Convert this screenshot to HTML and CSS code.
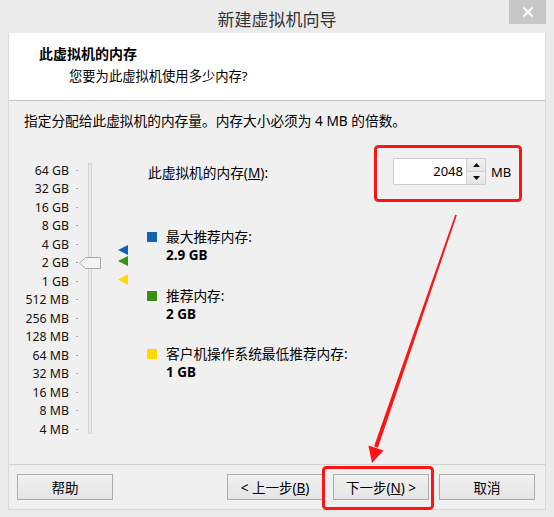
FILE: index.html
```html
<!DOCTYPE html>
<html lang="zh-CN">
<head>
<meta charset="utf-8">
<title>新建虚拟机向导</title>
<link rel="stylesheet" href="styles.css">
</head>
<body>
<div class="window">
  <div class="titlebar">
    <div class="title">新建虚拟机向导</div>
    <div class="close">
      <svg width="12" height="12" viewBox="0 0 12 12"><path d="M1.5 1.5 L10.5 10.5 M10.5 1.5 L1.5 10.5" stroke="#fff" stroke-width="2" fill="none"/></svg>
    </div>
  </div>
  <div class="client">
    <div class="header">
      <div class="h-title">此虚拟机的内存</div>
      <div class="h-sub">您要为此虚拟机使用多少内存?</div>
    </div>
    <div class="content">
      <p class="desc">指定分配给此虚拟机的内存量。内存大小必须为 4 MB 的倍数。</p>
      <div class="main">
        <div class="slider">
          <ul class="scale">
            <li>64 GB</li>
            <li>32 GB</li>
            <li>16 GB</li>
            <li>8 GB</li>
            <li>4 GB</li>
            <li>2 GB</li>
            <li>1 GB</li>
            <li>512 MB</li>
            <li>256 MB</li>
            <li>128 MB</li>
            <li>64 MB</li>
            <li>32 MB</li>
            <li>16 MB</li>
            <li>8 MB</li>
            <li>4 MB</li>
          </ul>
          <div class="track"></div>
          <svg class="thumb" width="23" height="13" viewBox="0 0 23 13"><path d="M0.5 6 L6.5 0.5 L21.5 0.5 L21.5 11.5 L6.5 11.5 Z" fill="#f4f4f4" stroke="#a9a9a9"/></svg>
          <svg class="marker m-blue" width="10" height="10" viewBox="0 0 10 10"><path d="M0 5 L10 0 L10 10 Z" fill="#0f63b0"/></svg>
          <svg class="marker m-green" width="10" height="10" viewBox="0 0 10 10"><path d="M0 5 L10 0 L10 10 Z" fill="#3c8f13"/></svg>
          <svg class="marker m-yellow" width="10" height="11" viewBox="0 0 10 11"><path d="M0 5.5 L10 0 L10 11 Z" fill="#ffd800"/></svg>
        </div>
        <div class="right">
          <div class="mem-row">
            <label class="mem-label">此虚拟机的内存(<u>M</u>):</label>
            <div class="spin">
              <div class="spin-input">2048</div>
              <div class="spin-btns">
                <div class="spin-btn"><svg width="7" height="4" viewBox="0 0 7 4"><path d="M3.5 0 L7 4 L0 4 Z" fill="#111"/></svg></div>
                <div class="spin-btn"><svg width="7" height="4" viewBox="0 0 7 4"><path d="M0 0 L7 0 L3.5 4 Z" fill="#111"/></svg></div>
              </div>
            </div>
            <span class="unit">MB</span>
          </div>
          <div class="legend">
            <div class="item">
              <span class="sq sq-blue"></span>
              <span class="item-label">最大推荐内存:</span>
              <span class="item-value">2.9 GB</span>
            </div>
            <div class="item">
              <span class="sq sq-green"></span>
              <span class="item-label">推荐内存:</span>
              <span class="item-value">2 GB</span>
            </div>
            <div class="item">
              <span class="sq sq-yellow"></span>
              <span class="item-label">客户机操作系统最低推荐内存:</span>
              <span class="item-value">1 GB</span>
            </div>
          </div>
        </div>
      </div>
    </div>
    <div class="footer">
      <button class="btn">帮助</button>
      <button class="btn btn-back">&lt; 上一步(<u>B</u>)</button>
      <button class="btn">下一步(<u>N</u>) &gt;</button>
      <button class="btn">取消</button>
    </div>
  </div>
  <svg class="annot" width="554" height="517" viewBox="0 0 554 517">
    <rect x="375.5" y="146.5" width="145" height="54" rx="3" ry="3" fill="none" stroke="#ff1414" stroke-width="3"/>
    <rect x="323.5" y="467.5" width="109" height="41" rx="3" ry="3" fill="none" stroke="#ff1414" stroke-width="3"/>
    <polygon points="456.8,215.3 455.2,214.7 374.1,446.3 377.9,447.7" fill="#ff1414"/>
    <polygon points="368.4,445.4 383.6,450.6 372,463" fill="#ff1414"/>
  </svg>
</div>
</body>
</html>
```

FILE: styles.css
```css
* { box-sizing: border-box; }
html, body { margin: 0; padding: 0; }
body {
  width: 554px;
  height: 517px;
  overflow: hidden;
  background: #ebebeb;
  font-family: "Noto Sans", "Noto Sans CJK SC", sans-serif;
  color: #000;
}
.window {
  position: relative;
  width: 554px;
  height: 517px;
  display: flex;
  flex-direction: column;
}
.titlebar {
  height: 33px;
  display: grid;
  grid-template-columns: 1fr auto 1fr;
  align-items: start;
}
.title {
  grid-column: 2;
  font-family: "Noto Sans CJK SC", sans-serif;
  font-size: 17px;
  line-height: 33px;
  padding-top: 2px;
  color: #333;
}
.close {
  grid-column: 3;
  justify-self: end;
  margin-right: 8px;
  width: 37px;
  height: 24px;
  background: #c7c7c7;
  display: flex;
  align-items: center;
  justify-content: center;
}
.client {
  margin: 0 8px;
  height: 477px;
  border: 1px solid #d9d9d9;
  border-top: none;
  background: #f0f0f0;
  display: flex;
  flex-direction: column;
}
.header {
  height: 68px;
  flex: none;
  background: #fff;
  border-bottom: 1px solid #c4c4c4;
  padding: 10px 0 0 30px;
}
.h-title {
  font-family: "Noto Sans CJK SC", sans-serif;
  font-weight: 700;
  font-size: 14px;
  line-height: 20px;
}
.h-sub {
  font-size: 13.3px;
  line-height: 20px;
  margin-top: 3px;
  padding-left: 30px;
}
.content {
  flex: 1;
  padding-top: 10px;
}
.desc {
  margin: 0;
  padding-left: 15px;
  font-size: 13.7px;
  line-height: 20px;
}
.main {
  margin-top: 27px;
  display: grid;
  grid-template-columns: 138px 1fr;
}
.slider {
  position: relative;
  display: flex;
  align-items: flex-start;
  padding-top: 2.75px;
}
.scale {
  list-style: none;
  margin: 0;
  padding: 0;
  width: 69px;
}
.scale li {
  height: 18.5px;
  display: flex;
  justify-content: flex-end;
  align-items: center;
  font-size: 12.3px;
  color: #111;
}
.scale li::after {
  content: "";
  width: 2px;
  height: 1px;
  margin-left: 7px;
  background: #a8a8a8;
}
.track {
  margin-left: 10px;
  margin-top: 2.25px;
  width: 4px;
  height: 271px;
  border: 1px solid #d6d6d6;
  background: #e9e9e9;
}
.thumb {
  position: absolute;
  left: 70px;
  top: 99px;
}
.marker {
  position: absolute;
  left: 109px;
}
.m-blue { top: 87px; }
.m-green { top: 98px; }
.m-yellow { top: 116px; }
.right {
  display: flex;
  flex-direction: column;
}
.mem-row {
  height: 27px;
  display: flex;
  align-items: center;
}
.mem-label {
  flex: 0 0 246px;
  padding-left: 1px;
  font-size: 13.7px;
}
.spin {
  display: flex;
  height: 27px;
  border: 1px solid #cdcdcd;
  background: #fff;
}
.spin-input {
  width: 72px;
  font-size: 13px;
  line-height: 25px;
  text-align: right;
  padding-right: 3px;
}
.spin-btns {
  width: 19px;
  display: flex;
  flex-direction: column;
  border-left: 1px solid #d4d4d4;
}
.spin-btn {
  flex: 1;
  display: flex;
  align-items: center;
  justify-content: center;
  background: linear-gradient(#f2f2f2, #e4e4e4);
}
.spin-btn + .spin-btn {
  border-top: 1px solid #d0d0d0;
}
.unit {
  margin-left: 5px;
  font-size: 13px;
}
.legend {
  margin-top: 43px;
  display: flex;
  flex-direction: column;
  gap: 22.5px;
}
.item {
  display: grid;
  grid-template-columns: 10px auto;
  column-gap: 9px;
  align-items: center;
}
.sq {
  width: 10px;
  height: 10px;
  grid-row: 1;
}
.sq-blue { background: #0f63b0; }
.sq-green { background: #3c8f13; }
.sq-yellow { background: #ffd800; }
.item-label {
  grid-column: 2;
  font-size: 13.7px;
  line-height: 18px;
}
.item-value {
  grid-column: 2;
  font-weight: 700;
  font-size: 13.5px;
  line-height: 18px;
}
.footer {
  height: 45px;
  flex: none;
  border-top: 1px solid #cfcfcf;
  padding: 9px 10px 0 8px;
  display: flex;
  align-items: flex-start;
  gap: 10px;
}
.btn {
  width: 96px;
  height: 26px;
  padding: 0;
  border: 1px solid #acacac;
  border-radius: 0;
  background: linear-gradient(#f0f0f0, #e5e5e5);
  font-family: "Noto Sans", "Noto Sans CJK SC", sans-serif;
  font-size: 13.5px;
  color: #000;
}
.btn-back {
  margin-left: auto;
}
.annot {
  position: absolute;
  left: 0;
  top: 0;
  pointer-events: none;
}
```
